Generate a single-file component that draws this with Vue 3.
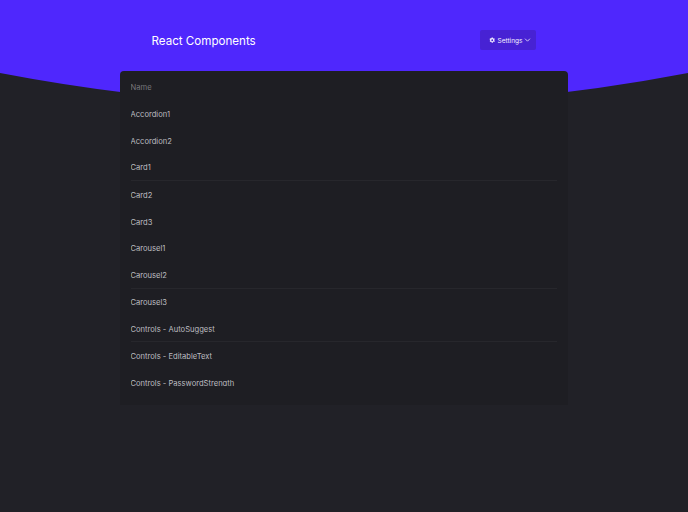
<script setup>
const rows = [
  { name: 'Accordion1' },
  { name: 'Accordion2' },
  { name: 'Card1', line: true },
  { name: 'Card2' },
  { name: 'Card3' },
  { name: 'Carousel1' },
  { name: 'Carousel2', line: true },
  { name: 'Carousel3' },
  { name: 'Controls - AutoSuggest', line: true },
  { name: 'Controls - EditableText' },
  { name: 'Controls - PasswordStrength' },
]
</script>

<template>
  <div class="page">
    <header class="hero">
      <svg class="curve" viewBox="0 0 688 37" preserveAspectRatio="none" aria-hidden="true">
        <path d="M0 0 Q344 66 688 0 L688 37 L0 37 Z" />
      </svg>
      <div class="bar">
        <h1 class="title">React Components</h1>
        <button class="settings" type="button">
          <svg class="gear" viewBox="0 0 16 16" aria-hidden="true">
            <path fill-rule="evenodd" d="M6.6 1h2.8l.4 2 1.2.7 1.9-.7 1.4 2.4-1.5 1.3v1.6l1.5 1.3-1.4 2.4-1.9-.7-1.2.7-.4 2H6.6l-.4-2-1.2-.7-1.9.7-1.4-2.4 1.5-1.3V7.2L1.3 5.4l1.4-2.4 1.9.7 1.2-.7zM8 5.7a2.3 2.3 0 1 0 0 4.6 2.3 2.3 0 0 0 0-4.6z" />
          </svg>
          <span>Settings</span>
          <svg class="chev" viewBox="0 0 10 10" aria-hidden="true">
            <path d="M1.5 2.4 5 6l3.5-3.6" />
          </svg>
        </button>
      </div>
    </header>
    <main class="card">
      <div class="scroll">
        <div class="row head">Name</div>
        <div v-for="r in rows" :key="r.name" class="row" :class="{ line: r.line }">{{ r.name }}</div>
      </div>
    </main>
  </div>
</template>

<style>
html, body { margin: 0; background: #212127; }
</style>

<style scoped>
.page {
  min-height: 512px;
  background: #212127;
  font-family: "Inter", "Liberation Sans", sans-serif;
}
.hero {
  position: relative;
  height: 110px;
  background: #4f27fd;
  overflow: hidden;
}
.curve {
  position: absolute;
  left: 0;
  bottom: 0;
  width: 100%;
  height: 37px;
  display: block;
}
.curve path { fill: #212127; }
.bar {
  display: flex;
  align-items: center;
  justify-content: space-between;
  padding: 30px 152px 0 151.5px;
  height: 20px;
}
.title {
  margin: 1px 0 0;
  font-size: 11.6px;
  font-weight: 400;
  color: #fff;
  white-space: nowrap;
}
.settings {
  display: flex;
  align-items: center;
  gap: 2px;
  width: 56px;
  height: 20px;
  padding: 1px 0 0 9px;
  border: 0;
  border-radius: 2px;
  background: #4722d4;
  color: #f4f1ff;
  font: 400 6.5px "Inter", "Liberation Sans", sans-serif;
}
.gear { width: 6.5px; height: 6.5px; fill: #f4f1ff; }
.chev { width: 7px; height: 7px; fill: none; stroke: #f4f1ff; stroke-width: 1.1; }
.card {
  position: relative;
  width: 448px;
  height: 334px;
  margin: -39px auto 0;
  padding: 3px 11px 0 10.5px;
  box-sizing: border-box;
  background: #1e1e23;
  border-radius: 4px 4px 0 0;
}
.scroll {
  height: 312px;
  overflow: hidden;
}
.row {
  height: 26.85px;
  box-sizing: border-box;
  display: flex;
  align-items: center;
  padding-top: 1px;
  font-size: 7.6px;
  color: #bdbdc0;
  white-space: nowrap;
}
.row.head { color: #77777c; }
.row.line { border-bottom: 1px solid #27272c; }
</style>
